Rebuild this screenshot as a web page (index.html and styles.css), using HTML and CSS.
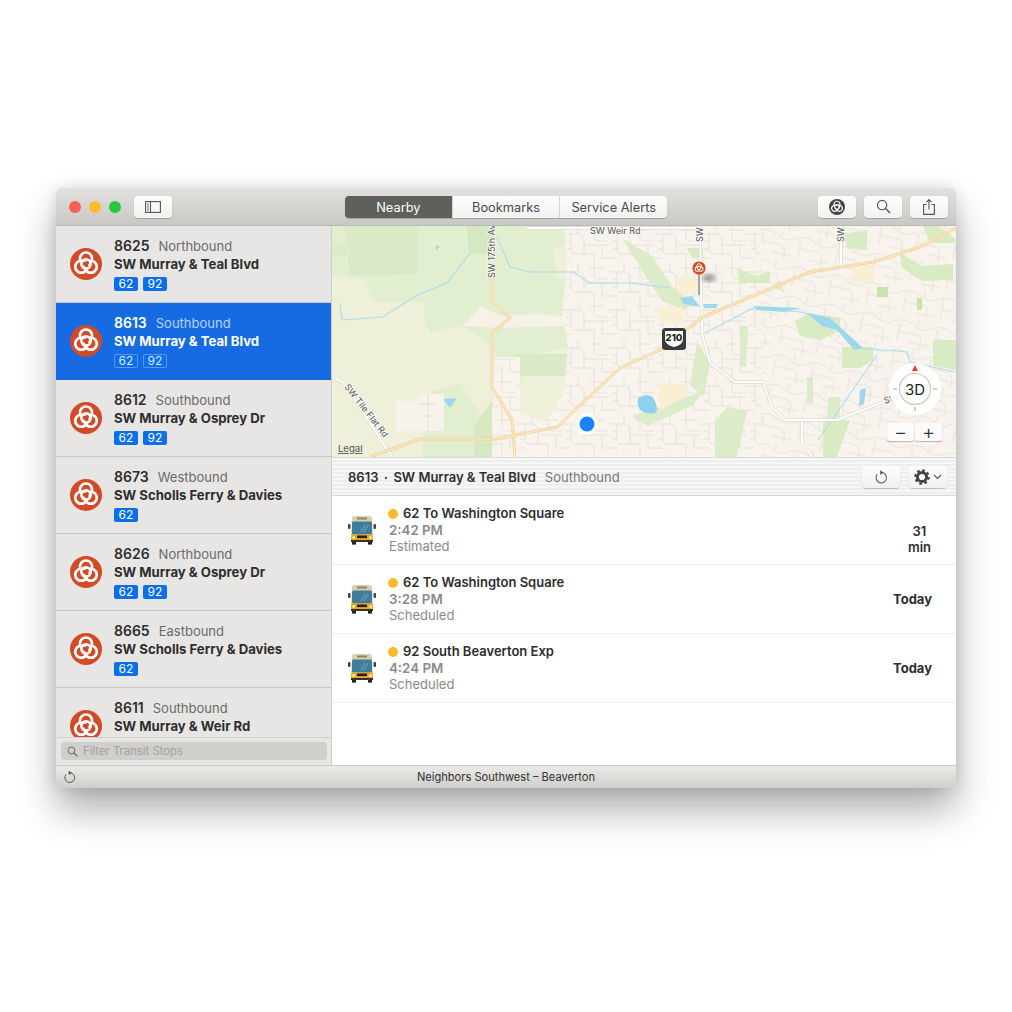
FILE: index.html
```html
<!DOCTYPE html>
<html lang="en">

<head>
    <meta charset="UTF-8">
    <title>Transit Stops</title>
    <link rel="stylesheet" href="styles.css">
</head>

<body>
    <svg class="defs" width="0" height="0">
        <symbol id="logo" viewBox="0 0 32 32">
            <circle cx="16" cy="16" r="16" fill="#d24a27"/>
            <g fill="none" stroke="#fff" stroke-width="2.6" stroke-linecap="round">
                <circle cx="16" cy="16" r="4.600"/>
                <path d="M10.8 13.500 A6 6 0 1 1 21.200 13.500 L19.500 17"/>
                <path d="M10.8 13.500 A6 6 0 1 1 21.200 13.500 L19.500 17" transform="rotate(120 16 16)"/>
                <path d="M10.8 13.500 A6 6 0 1 1 21.200 13.500 L19.500 17" transform="rotate(240 16 16)"/>
            </g>
        </symbol>
        <symbol id="logo-dark" viewBox="0 0 32 32">
            <circle cx="16" cy="16" r="16" fill="#444"/>
            <g fill="none" stroke="#fff" stroke-width="2.4" stroke-linecap="round">
                <circle cx="16" cy="16" r="4.600"/>
                <path d="M10.8 13.500 A6 6 0 1 1 21.200 13.500 L19.500 17"/>
                <path d="M10.8 13.500 A6 6 0 1 1 21.200 13.500 L19.500 17" transform="rotate(120 16 16)"/>
                <path d="M10.8 13.500 A6 6 0 1 1 21.200 13.500 L19.500 17" transform="rotate(240 16 16)"/>
            </g>
        </symbol>
        <symbol id="bus" viewBox="0 0 28 30">
            <rect x="0" y="9" width="2.5" height="5" rx="1" fill="#444"/>
            <rect x="25.5" y="9" width="2.5" height="5" rx="1" fill="#444"/>
            <path d="M4 3 Q4 1 7 1 H21 Q24 1 24 3 L25 24 H3 Z" fill="#d9d0ae"/>
            <rect x="9" y="2.5" width="10" height="2" fill="#8b8672"/>
            <rect x="4" y="6.500" width="20" height="13" rx="1.5" fill="#3f7d9b"/>
            <path d="M13 17 L17 10 M16 17 L20 10" stroke="#8fb9cc" stroke-width=".7"/>
            <path d="M3.4 19.5 H24.6 L25 25 H3 Z" fill="#f0a61c"/>
            <rect x="9" y="20.5" width="10" height="2.6" fill="#222"/>
            <circle cx="5.6" cy="22.6" r="1.3" fill="#fff6d8"/>
            <circle cx="22.4" cy="22.6" r="1.3" fill="#fff6d8"/>
            <rect x="3" y="25" width="22" height="2" fill="#333"/>
            <rect x="4" y="27" width="4" height="2.6" fill="#222"/>
            <rect x="20" y="27" width="4" height="2.6" fill="#222"/>
        </symbol>
        <symbol id="refresh" viewBox="0 0 16 16">
            <path d="M9.6 2.9 A6 6 0 1 1 3.6 5" fill="none" stroke="#555" stroke-width="1.2"/>
            <path d="M7 0.4 L11 3 L7 5.4 Z" fill="#555"/>
        </symbol>
        <symbol id="search" viewBox="0 0 16 16">
            <circle cx="6.5" cy="6.5" r="5" fill="none" stroke="#555" stroke-width="1.2"/>
            <path d="M10.2 10.2 L15 15" stroke="#555" stroke-width="1.5"/>
        </symbol>
    </svg>

    <div class="window">
        <header class="titlebar">
            <div class="lights">
                <span class="light red"></span>
                <span class="light yellow"></span>
                <span class="light green"></span>
            </div>
            <button class="tool sidebar-btn">
                <svg width="16" height="12" viewBox="0 0 16 12">
                    <rect x=".6" y=".6" width="14.8" height="10.8" fill="none" stroke="#555" stroke-width="1.1"/>
                    <path d="M5.5 .6 V11.4" stroke="#555" stroke-width="1.1"/>
                    <path d="M2 3 H4 M2 5 H4 M2 7 H4 M2 9 H4" stroke="#777"/>
                </svg>
            </button>
            <div class="segments">
                <span class="segment active">Nearby</span>
                <span class="segment">Bookmarks</span>
                <span class="segment">Service Alerts</span>
            </div>
            <div class="tools">
                <button class="tool"><svg width="16" height="16"><use href="#logo-dark"/></svg></button>
                <button class="tool"><svg width="15" height="15"><use href="#search"/></svg></button>
                <button class="tool">
                    <svg width="12" height="16" viewBox="0 0 12 16">
                        <path d="M3.5 5.5 H.6 V15.4 H11.4 V5.5 H8.5" fill="none" stroke="#555" stroke-width="1.1"/>
                        <path d="M6 10.5 V.8 M3.4 3.2 L6 .6 L8.6 3.2" fill="none" stroke="#555" stroke-width="1.1"/>
                    </svg>
                </button>
            </div>
        </header>

        <div class="content">
            <aside class="sidebar">
                <div class="stops">
                    <div class="stop">
                        <svg class="stop-logo"><use href="#logo"/></svg>
                        <div class="stop-text">
                            <div class="stop-id"><b>8625</b><span>Northbound</span></div>
                            <div class="stop-name">SW Murray &amp; Teal Blvd</div>
                            <div class="badges"><span class="badge">62</span><span class="badge">92</span></div>
                        </div>
                    </div>
                    <div class="stop selected">
                        <svg class="stop-logo"><use href="#logo"/></svg>
                        <div class="stop-text">
                            <div class="stop-id"><b>8613</b><span>Southbound</span></div>
                            <div class="stop-name">SW Murray &amp; Teal Blvd</div>
                            <div class="badges"><span class="badge">62</span><span class="badge">92</span></div>
                        </div>
                    </div>
                    <div class="stop">
                        <svg class="stop-logo"><use href="#logo"/></svg>
                        <div class="stop-text">
                            <div class="stop-id"><b>8612</b><span>Southbound</span></div>
                            <div class="stop-name">SW Murray &amp; Osprey Dr</div>
                            <div class="badges"><span class="badge">62</span><span class="badge">92</span></div>
                        </div>
                    </div>
                    <div class="stop">
                        <svg class="stop-logo"><use href="#logo"/></svg>
                        <div class="stop-text">
                            <div class="stop-id"><b>8673</b><span>Westbound</span></div>
                            <div class="stop-name">SW Scholls Ferry &amp; Davies</div>
                            <div class="badges"><span class="badge">62</span></div>
                        </div>
                    </div>
                    <div class="stop">
                        <svg class="stop-logo"><use href="#logo"/></svg>
                        <div class="stop-text">
                            <div class="stop-id"><b>8626</b><span>Northbound</span></div>
                            <div class="stop-name">SW Murray &amp; Osprey Dr</div>
                            <div class="badges"><span class="badge">62</span><span class="badge">92</span></div>
                        </div>
                    </div>
                    <div class="stop">
                        <svg class="stop-logo"><use href="#logo"/></svg>
                        <div class="stop-text">
                            <div class="stop-id"><b>8665</b><span>Eastbound</span></div>
                            <div class="stop-name">SW Scholls Ferry &amp; Davies</div>
                            <div class="badges"><span class="badge">62</span></div>
                        </div>
                    </div>
                    <div class="stop">
                        <svg class="stop-logo"><use href="#logo"/></svg>
                        <div class="stop-text">
                            <div class="stop-id"><b>8611</b><span>Southbound</span></div>
                            <div class="stop-name">SW Murray &amp; Weir Rd</div>
                        </div>
                    </div>
                </div>
                <div class="filter">
                    <div class="filter-box">
                        <svg width="11" height="11"><use href="#search"/></svg>
                        <span>Filter Transit Stops</span>
                    </div>
                </div>
            </aside>

            <main class="main">
                <div class="map">
                    <svg class="map-art" width="624" height="231" viewBox="0 0 624 231">
                        <defs>
                            <pattern id="streets" width="46" height="38" patternUnits="userSpaceOnUse">
                                <path d="M0 8 H16 Q21 8 22 13 V28 M22 19 H46 M9 8 V23 Q9 28 14 28 H32 M32 28 V38 M32 0 V11 Q32 15 37 15 H46 M0 32 H9 M40 19 V32 H46 M16 0 V8 M4 15 H9 M4 23 H9 M27 4 H42"
                                    fill="none" stroke="#e4e0d7" stroke-width=".9"/>
                            </pattern>
                            <pattern id="streets2" width="38" height="30" patternUnits="userSpaceOnUse" patternTransform="rotate(12)">
                                <path d="M0 6 Q10 0 20 6 T38 6 M6 6 V24 M6 15 H24 Q30 15 30 22 V30 M18 24 H38 M24 0 V6"
                                    fill="none" stroke="#e4e0d7" stroke-width=".9"/>
                            </pattern>
                            <filter id="blur"><feGaussianBlur stdDeviation="2.5"/></filter>
                        </defs>
                        <rect width="624" height="231" fill="#eff0da"/>

                        <!-- green areas west of town -->
                        <path d="M0 0 H240 V20 L222 22 L225 52 L275 60 L300 88 L332 82 V118 L250 118 L205 128 L182 165 L165 130 L150 112 L130 100 L98 106 L92 94 V76 L42 76 L30 52 L0 50 Z" fill="#e2eed0"/>
                        <path d="M12 0 H85 V48 L18 50 Z" fill="#dbeac6"/>
                        <path d="M135 0 H160 V28 H137 Z" fill="#d6e8c0"/>
                        <path d="M0 18 H18 V30 H0 Z" fill="#dcebc8"/>
                        <path d="M100 165 L128 157 L150 190 L155 231 H90 L92 200 Z" fill="#e2eed0"/>
                        <path d="M142 200 L160 175 L172 205 L178 231 H142 Z" fill="#d6e8c0"/>
                        <path d="M182 128 H252 V150 H182 Z" fill="#dbeac6"/>
                        <path d="M150 80 L168 90 L200 88 L235 90 L233 100 L170 102 L130 100 Z" fill="#f6f2e8"/>

                        <!-- town -->
                        <path d="M232 0 H624 V231 H160 V131 H188 V188 L215 195 L232 165 L236 120 L230 85 L235 40 Z" fill="#f8f4ed"/>
                        <path d="M232 0 H430 V231 H160 V131 H188 V188 L215 195 L232 165 L236 120 L230 85 L235 40 Z" fill="url(#streets)"/>
                        <path d="M430 0 H624 V231 H430 Z" fill="url(#streets2)"/>
                        <path d="M64 175 H88 V205 H64 Z M88 168 H112 V205 H88 Z" fill="#f7f3ec"/>
                        <path d="M88 178 H104 M88 190 H104 M96 168 V205" stroke="#e3dfd5" fill="none"/>

                        <!-- green bits in town -->
                        <path d="M290 12 L320 30 L340 60 L362 78 L352 84 L330 75 L320 60 Z" fill="#dcecc8"/>
                        <path d="M463 95 L478 87 L508 92 L508 105 L488 114 L468 110 Z" fill="#d8ebc2"/>
                        <path d="M510 121 H541 V134 L528 142 H510 Z" fill="#d8ebc2"/>
                        <path d="M601 114 H624 V144 L601 140 Z" fill="#d8ebc2"/>
                        <path d="M496 171 H508 V194 H496 Z M475 151 H481 V177 H475 Z M383 195 L395 181 L415 185 L405 231 H383 Z" fill="#dcecc8"/>
                        <path d="M491 194 H518 L505 231 H491 Z" fill="#d8ebc2"/>
                        <path d="M405 42 L425 50 L438 45 V57 H408 Z M511 8 L535 4 V24 L515 22 Z" fill="#d8ebc2"/>
                        <path d="M568 27 L590 40 L621 38 V54 L590 55 L570 42 Z M591 0 H605 L623 12 V17 H598 Z M355 22 H371 V32 H360 Z" fill="#d8ebc2"/>
                        <path d="M545 61 H556 V71 H545 Z M585 72 H590 V84 H585 Z" fill="#c9e4ae"/>
                        <path d="M408 100 H416 L414 141 H408 Z M440 60 L448 55 L452 66 Z M365 115 L378 137 L372 170 L358 160 Z" fill="#dcecc8"/>
                        <path d="M300 190 L330 180 L372 165 L360 180 L315 200 Z" fill="#dcecc8"/>
                        <path d="M521 39 H543 V56 H521 Z M345 51 H365 V67 H345 Z M328 81 H351 V97 H328 Z" fill="#f9f0d4"/>
                        <path d="M328 157 L352 158 L356 170 L328 184 Z" fill="#f9f0d4"/>

                        <!-- water -->
                        <path d="M8 77 L10 94 L51 91 L85 69 L115 57 L138 27 M165 11 L178 41 L198 46 L241 46 L258 57 L298 57 L338 62 M373 107 L421 82 L468 86 L498 94 L528 122 L575 126 L578 136 L623 146 M545 129 L486 214" fill="none" stroke="#a9dcf0" stroke-width="1.1"/>
                        <path d="M475 87 L498 92 L531 122 L522 124 L505 104 L490 100 Z M348 72 L360 70 L368 81 L352 78 Z M371 78 L386 78 L384 82 L372 82 Z M528 164 L534 162 L532 178 L527 180 Z M421 80 L468 82 L452 86 L425 84 Z" fill="#9dd7ee"/>
                        <path d="M306 172 Q320 164 324 178 Q328 190 316 187 Q304 186 306 172 Z" fill="#8ed0ef"/>
                        <path d="M111 173 L125 172 L118 182 Z M104 19 L108 21 L104 24 Z" fill="#9dd7ee"/>

                        <!-- roads -->
                        <g fill="none" stroke-linejoin="round">
                            <g stroke="#d6d1c8" stroke-width="3">
                                <path d="M195 2 H368 M368 0 L370 107 L378 137 L403 156 H431 L440 181 L453 194 H505 L551 176 M470 194 V217 L480 231 M509 0 V41 M-2 149 L12 157 L60 231"/>
                            </g>
                            <g stroke="#fff" stroke-width="2">
                                <path d="M195 2 H368 M368 0 L370 107 L378 137 L403 156 H431 L440 181 L453 194 H505 L551 176 M470 194 V217 L480 231 M509 0 V41 M-2 149 L12 157 L60 231"/>
                            </g>
                            <g stroke="#f2d29e" stroke-width="3">
                                <path d="M38 231 L88 213 L165 213 L225 201 L288 142 L328 124 L371 91 L478 46 L541 36 L588 21 L624 2"/>
                                <path d="M160 50 V76 L178 92 L160 107 V161 L180 194 L183 231"/>
                            </g>
                            <g stroke="#fdeccb" stroke-width="1.200">
                                <path d="M38 231 L88 213 L165 213 L225 201 L288 142 L328 124 L371 91 L478 46 L541 36 L588 21 L624 2"/>
                                <path d="M160 50 V76 L178 92 L160 107 V161 L180 194 L183 231"/>
                            </g>
                        </g>

                        <!-- labels -->
                        <g class="map-label">
                            <text x="258" y="8">SW Weir Rd</text>
                            <text transform="translate(163 52) rotate(-90)">SW 175th Av</text>
                            <text transform="translate(371 16) rotate(-90)">SW</text>
                            <text transform="translate(512 16) rotate(-90)">SW</text>
                            <text transform="translate(12 161) rotate(52)">SW Tile Flat Rd</text>
                            <text transform="translate(553 178) rotate(-18)">SW</text>
                        </g>

                        <!-- transit pin -->
                        <ellipse cx="377" cy="52" rx="7" ry="4" fill="#999" filter="url(#blur)"/>
                        <path d="M367 46 V69" stroke="#888" stroke-width="1.4"/>
                        <circle cx="367" cy="42" r="6.600" fill="#e0452b"/>
                        <use href="#logo" x="361" y="36" width="12" height="12"/>

                        <!-- route shield -->
                        <rect x="330" y="102" width="24" height="22" rx="3.5" fill="#3b3b3b"/>
                        <path d="M333 105 H351 V113 Q351 119 342 121 Q333 119 333 113 Z" fill="#fff"/>
                        <text class="shield-text" x="342" y="115" text-anchor="middle">210</text>

                        <!-- location dot -->
                        <circle cx="255" cy="198" r="11" fill="#fff"/>
                        <circle cx="255" cy="198" r="7.500" fill="#1a82fb"/>

                        <!-- compass -->
                        <circle cx="583" cy="163" r="26" fill="#fff" opacity=".93"/>
                        <circle cx="583" cy="163" r="15.500" fill="none" stroke="#c9c9c9" stroke-width="1.200"/>
                        <circle cx="583" cy="163" r="14" fill="#fff"/>
                        <path d="M583 139 L586 145 H580 Z" fill="#ee3b2f"/>
                        <path d="M561 163 H565 M601 163 H605 M583 181 V185" stroke="#aaa" stroke-width="1.200"/>
                        <text class="compass-text" x="583" y="168.500" text-anchor="middle">3D</text>
                    </svg>
                    <span class="legal">Legal</span>
                    <div class="zoom-btns">
                        <button class="zoom-btn">&minus;</button>
                        <button class="zoom-btn">+</button>
                    </div>
                </div>

                <div class="detail-head">
                    <b>8613&thinsp; &middot; &thinsp;SW Murray &amp; Teal Blvd</b>
                    <span>Southbound</span>
                    <div class="detail-tools">
                        <button class="tool"><svg width="14" height="14"><use href="#refresh"/></svg></button>
                        <button class="tool gear-btn">
                            <svg width="16" height="16" viewBox="0 0 16 16">
                                <circle cx="8" cy="8" r="4.600" fill="none" stroke="#444" stroke-width="3"/>
                                <circle cx="8" cy="8" r="6.600" fill="none" stroke="#444" stroke-width="2.400" stroke-dasharray="2.6 2.58"/>
                            </svg>
                            <svg width="9" height="6" viewBox="0 0 9 6"><path d="M1 1 L4.500 4.500 L8 1" fill="none" stroke="#555" stroke-width="1.200"/></svg>
                        </button>
                    </div>
                </div>

                <div class="arrivals">
                    <div class="arrival">
                        <svg class="bus"><use href="#bus"/></svg>
                        <div class="arrival-text">
                            <div class="arrival-route"><i class="dot"></i>62 To Washington Square</div>
                            <div class="arrival-time">2:42 PM</div>
                            <div class="arrival-status">Estimated</div>
                        </div>
                        <div class="arrival-when minutes">31<br>min</div>
                    </div>
                    <div class="arrival">
                        <svg class="bus"><use href="#bus"/></svg>
                        <div class="arrival-text">
                            <div class="arrival-route"><i class="dot"></i>62 To Washington Square</div>
                            <div class="arrival-time">3:28 PM</div>
                            <div class="arrival-status">Scheduled</div>
                        </div>
                        <div class="arrival-when">Today</div>
                    </div>
                    <div class="arrival">
                        <svg class="bus"><use href="#bus"/></svg>
                        <div class="arrival-text">
                            <div class="arrival-route"><i class="dot"></i>92 South Beaverton Exp</div>
                            <div class="arrival-time">4:24 PM</div>
                            <div class="arrival-status">Scheduled</div>
                        </div>
                        <div class="arrival-when">Today</div>
                    </div>
                </div>
            </main>
        </div>

        <footer class="statusbar">
            <svg class="status-refresh" width="13" height="14"><use href="#refresh"/></svg>
            <span>Neighbors Southwest &ndash; Beaverton</span>
        </footer>
    </div>
</body>

</html>
```

FILE: styles.css
```css
body {
    font-family: 'Inter', 'Liberation Sans', sans-serif;
    background-color: white;
    margin: 0;
    padding: 188px 0 0 56px;
    height: 1012px;
    box-sizing: border-box;
    overflow: hidden;
    color: #2e2e2e;
}

button {
    font-family: inherit;
    padding: 0;
    border: none;
}

.defs {
    position: absolute;
}

.window {
    width: 900px;
    height: 600px;
    border-radius: 6px;
    overflow: hidden;
    display: flex;
    flex-direction: column;
    box-shadow: 0 22px 38px rgba(0, 0, 0, 0.32), 0 0 14px rgba(0, 0, 0, 0.12);
}

/* title bar */

.titlebar {
    height: 38px;
    box-sizing: border-box;
    flex: none;
    display: flex;
    align-items: center;
    padding: 0 8px 0 13px;
    background: linear-gradient(#e3e1de, #c9c8c4);
    border-bottom: 1px solid #b9b8b5;
}

.lights {
    display: flex;
    gap: 8px;
}

.light {
    width: 12px;
    height: 12px;
    border-radius: 50%;
}

.red { background: #fc5e57; }
.yellow { background: #fdbb2e; }
.green { background: #27c83f; }

.tool {
    width: 38px;
    height: 22px;
    display: flex;
    align-items: center;
    justify-content: center;
    gap: 4px;
    border-radius: 4px;
    background: linear-gradient(#fdfdfd, #f1f1f1);
    box-shadow: 0 1px 1px rgba(0, 0, 0, 0.2);
}

.sidebar-btn {
    margin-left: 13px;
}

.segments {
    margin-left: 173px;
    display: flex;
    width: 322px;
    height: 22px;
    border-radius: 4px;
    overflow: hidden;
    box-shadow: 0 1px 1px rgba(0, 0, 0, 0.2);
    background: linear-gradient(#fdfdfd, #f1f1f1);
}

.segment {
    flex: 1;
    line-height: 23px;
    text-align: center;
    font-size: 12.800px;
    color: #4a4a4a;
    border-left: 1px solid #d6d6d6;
}

.segment.active {
    background: #5f5f5c;
    color: white;
    border-left: none;
}

.tools {
    margin-left: auto;
    display: flex;
    gap: 8px;
}

/* sidebar */

.content {
    flex: 1;
    display: flex;
    min-height: 0;
}

.sidebar {
    width: 276px;
    flex: none;
    box-sizing: border-box;
    border-right: 1px solid #cfcdca;
    background: #e8e6e4;
    display: flex;
    flex-direction: column;
}

.stops {
    flex: 1;
    min-height: 0;
    overflow: hidden;
}

.stop {
    height: 77px;
    box-sizing: border-box;
    display: flex;
    padding: 13px 0 0 14px;
    border-bottom: 1px solid #c9c7c4;
}

.stop-logo {
    width: 32px;
    height: 32px;
    margin-top: 9px;
    flex: none;
}

.stop-text {
    margin-left: 12px;
}

.stop-id {
    font-size: 13px;
    line-height: 16px;
    margin-top: -1px;
}

.stop-id b {
    font-weight: 600;
    font-size: 14px;
    margin-right: 9px;
}

.stop-id span {
    color: #6a6a6a;
}

.stop-name {
    font-size: 13.150px;
    font-weight: 700;
    line-height: 18px;
    margin-top: 1px;
}

.badges {
    display: flex;
    gap: 5px;
    margin-top: 4px;
}

.badge {
    width: 24px;
    height: 14px;
    box-sizing: border-box;
    border-radius: 2px;
    background: #0a6fe8;
    color: white;
    font-size: 12px;
    line-height: 14px;
    text-align: center;
}

.stop.selected {
    background: #166be2;
    color: white;
    border-bottom-color: #166be2;
}

.selected .stop-id span {
    color: #b9d2f6;
}

.selected .badge {
    border: 1px solid #5a97ee;
    line-height: 12px;
    color: #dbe8fb;
}

.filter {
    height: 28px;
    flex: none;
    box-sizing: border-box;
    padding: 4px 4px 0 5px;
    border-top: 1px solid #d2d0cd;
}

.filter-box {
    height: 18px;
    border-radius: 4px;
    background: #d1cfcc;
    display: flex;
    align-items: center;
    gap: 5px;
    padding-left: 6px;
    font-size: 11.300px;
    color: #a2a19f;
}

/* map */

.main {
    flex: 1;
    display: flex;
    flex-direction: column;
    background: white;
    min-width: 0;
}

.map {
    height: 231px;
    flex: none;
    position: relative;
    overflow: hidden;
}

.map-art {
    display: block;
}

.map-label text {
    font-size: 9px;
    font-weight: 500;
    fill: #666;
    stroke: #fff;
    stroke-width: 1.500px;
    paint-order: stroke;
}

.shield-text {
    font-size: 9.500px;
    font-weight: 800;
    fill: #222;
}

.compass-text {
    font-size: 15px;
    fill: #222;
}

.legal {
    position: absolute;
    left: 6px;
    bottom: 3px;
    font-size: 9.500px;
    font-weight: 500;
    color: #666;
    text-decoration: underline;
}

.zoom-btns {
    position: absolute;
    right: 14px;
    bottom: 16px;
    display: flex;
    gap: 1px;
}

.zoom-btn {
    width: 27px;
    height: 18px;
    border-radius: 3px;
    background: #fbfbfb;
    box-shadow: 0 1px 1px rgba(0, 0, 0, 0.25);
    font-size: 20px;
    font-weight: 300;
    line-height: 17px;
    color: #333;
}

/* stop details */

.detail-head {
    height: 39px;
    flex: none;
    box-sizing: border-box;
    display: flex;
    align-items: center;
    padding: 0 9px 0 16px;
    font-size: 13px;
    background: repeating-linear-gradient(#f6f6f6 0, #f6f6f6 2px, #eeeeee 2px, #eeeeee 4px);
    border-top: 1px solid #d8d8d8;
    border-bottom: 1px solid #d6d6d6;
}

.detail-head b {
    font-weight: 600;
    margin-right: 9px;
}

.detail-head span {
    color: #777;
    font-size: 13px;
}

.detail-tools {
    margin-left: auto;
    display: flex;
    gap: 9px;
}

.gear-btn {
    gap: 3px;
}

.arrivals {
    flex: 1;
}

.arrival {
    height: 69px;
    box-sizing: border-box;
    display: flex;
    align-items: center;
    padding: 0 24px 0 16px;
    border-bottom: 1px solid #efefef;
}

.bus {
    width: 28px;
    height: 30px;
    flex: none;
}

.arrival-text {
    margin-left: 13px;
    flex: 1;
}

.arrival-route {
    font-size: 13px;
    font-weight: 600;
    line-height: 17px;
    display: flex;
    align-items: center;
}

.dot {
    width: 10px;
    height: 10px;
    border-radius: 50%;
    background: #fdb92e;
    margin-left: -1px;
    margin-right: 5px;
}

.arrival-time {
    font-size: 13.300px;
    font-weight: 600;
    line-height: 16px;
    color: #8a8a8a;
}

.arrival-status {
    font-size: 13px;
    line-height: 17px;
    color: #8a8a8a;
}

.arrival-when {
    font-size: 13px;
    font-weight: 700;
    line-height: 16px;
    text-align: center;
}

.minutes {
    margin-top: 18px;
    font-weight: 600;
    padding-right: 1px;
}

/* status bar */

.statusbar {
    height: 23px;
    flex: none;
    box-sizing: border-box;
    position: relative;
    display: flex;
    align-items: center;
    justify-content: center;
    padding-bottom: 1px;
    font-size: 11.100px;
    color: #333;
    background: linear-gradient(#eceae8, #cfcecb);
    border-top: 1px solid #cbc9c6;
}

.status-refresh {
    position: absolute;
    left: 7px;
    top: 4px;
}
```
